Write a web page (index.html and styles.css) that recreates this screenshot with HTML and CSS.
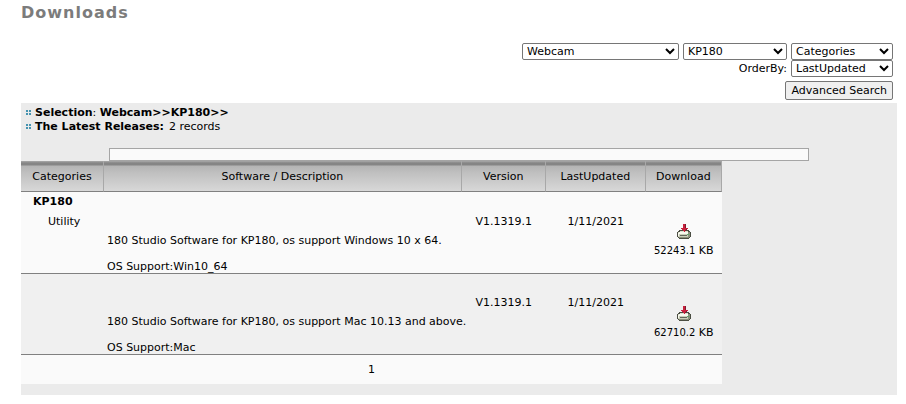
FILE: index.html
```html
<!DOCTYPE html>
<html lang="en">
<head>
  <meta charset="UTF-8" />
  <meta name="viewport" content="width=device-width,initial-scale=1" />
  <title>Downloads</title>
  <link rel="stylesheet" href="styles.css">
</head>
<body>

  <svg class="defs" aria-hidden="true">
    <symbol id="download-icon" viewBox="0 0 14 15">
      <path fill="#4a4d42" d="M2 6h10v1h1v1h1v5h-1v1h-1v1H2v-1H1v-1H0V8h1V7h1z"/>
      <path fill="#dfe2cf" d="M3 7h8v1H3z"/>
      <path fill="#c9cdb8" d="M1 8h11v5H1z"/>
      <path fill="#f8f9ee" d="M2 8h9v1H2zM1 9h10v1H1zM1 10h1v2H1z"/>
      <path fill="#62665a" d="M3 11h7v1H3z"/>
      <path fill="#8b907b" d="M11 8h2v5h-2zM2 13h10v1H2z"/>
      <path fill="#5fa56a" d="M10 10h2v1h-2z"/>
      <path fill="#c8203c" d="M6 0h3v4h2v1h-1v1H9v1H8v1H7V7H6V6H5V5H4V4h2z"/>
      <path fill="#7c1c30" d="M8 0h1v4H8zM9 5h1v1H9zM8 6h1v1H8z"/>
    </symbol>
    <symbol id="dots-icon" viewBox="0 0 5 5" shape-rendering="crispEdges">
      <path fill="#4593b0" d="M0 0h2v2H0zM3 0h2v2H3zM0 3h2v2H0zM3 3h2v2H3z"/>
    </symbol>
  </svg>

  <h1>Downloads</h1>

  <!-- FILTERS -->
  <form class="filters">
    <div class="filter-row">
      <select class="product" aria-label="Product"><option>Webcam</option></select>
      <select class="model" aria-label="Model"><option>KP180</option></select>
      <select class="sort" aria-label="Categories"><option>Categories</option></select>
    </div>
    <div class="filter-row">
      <label for="order-by">OrderBy:</label>
      <select class="sort" id="order-by"><option>LastUpdated</option></select>
    </div>
    <button type="button">Advanced Search</button>
  </form>

  <!-- RESULTS -->
  <div class="panel">
    <div class="summary">
      <div><svg class="dots"><use href="#dots-icon"/></svg><b>Selection</b>: <b>Webcam&gt;&gt;KP180&gt;&gt;</b></div>
      <div><svg class="dots"><use href="#dots-icon"/></svg><b>The Latest Releases:</b><span class="count">2 records</span></div>
    </div>
    <input class="keyword" type="text" aria-label="Keyword">

    <table>
      <thead>
        <tr>
          <th class="col-cat">Categories</th>
          <th>Software / Description</th>
          <th class="col-version">Version</th>
          <th class="col-date">LastUpdated</th>
          <th class="col-file">Download</th>
        </tr>
      </thead>
      <tbody>
        <tr>
          <td class="cat"><b>KP180</b><span>Utility</span></td>
          <td class="desc">180 Studio Software for KP180, os support Windows 10 x 64.<br><br>OS Support:Win10_64</td>
          <td class="info">V1.1319.1</td>
          <td class="info">1/11/2021</td>
          <td class="file"><a href="#" aria-label="Download"><svg class="download"><use href="#download-icon"/></svg></a><small>52243.1</small> KB</td>
        </tr>
        <tr class="alt">
          <td></td>
          <td class="desc">180 Studio Software for KP180, os support Mac 10.13 and above.<br><br>OS Support:Mac</td>
          <td class="info">V1.1319.1</td>
          <td class="info">1/11/2021</td>
          <td class="file"><a href="#" aria-label="Download"><svg class="download"><use href="#download-icon"/></svg></a><small>62710.2</small> KB</td>
        </tr>
      </tbody>
      <tfoot>
        <tr><td colspan="5">1</td></tr>
      </tfoot>
    </table>
  </div>

</body>
</html>
```
FILE: styles.css
```css
body {
  margin: 0;
  padding: 3px 9px 9px 21px;
  background: #fff;
  color: #000;
  font: 11px/14px Verdana, "DejaVu Sans", sans-serif;
}
.defs { position: absolute; width: 0; height: 0; }
h1 { margin: 0; font-size: 16px; line-height: 20px; letter-spacing: 1px; color: #7c7c7c; }

.filters { display: flex; flex-direction: column; align-items: flex-end; padding: 20px 4px 3px 0; }
.filter-row { display: flex; align-items: center; gap: 4px; }
.filters select, .filters button { margin: 0; font: inherit; color: #000; }
.filters select { height: 17px; padding: 0; border: 1px solid #767676; border-radius: 2px; background-color: #fff; }
.product { width: 157px; }
.model { width: 104px; }
.sort { width: 102px; }
.filters button { height: 19px; margin-top: 4px; padding: 0 5px; border: 1px solid #767676; border-radius: 2px; background: #efefef; }

.panel { padding-bottom: 11px; background: #ebebeb; }
.summary { padding: 3px 5px 14px; }
.dots { width: 5px; height: 5px; margin-right: 4px; vertical-align: 1px; }
.count { margin-left: 5px; }
.keyword { display: block; box-sizing: border-box; width: 80%; height: 13px; margin: 0 auto; padding: 0 2px; border: 1px solid #a5a5a5; background: #fafafa; font: inherit; }

table { width: 80%; table-layout: fixed; border-spacing: 0; }
th { height: 31px; box-sizing: border-box; padding: 2px 0 0; border-bottom: 1px solid #808080; border-right: 1px solid #a8a8a8; background: linear-gradient(#aaa 0, #858585 2px, #858585 4px, #b4b4b4 5px, #c0c0c0 12px, #d8d8d8 100%); font-weight: normal; }
.col-cat { width: 83px; }
.col-version { width: 84px; }
.col-date { width: 100px; }
.col-file { width: 76px; }
td { padding: 0; border-bottom: 1px solid #808080; background: #fafafa; line-height: 13px; vertical-align: top; }
.alt td { background: #f0f0f0; }
.cat { padding: 3px 0 0 12px; }
.cat b, .cat span { display: block; }
.cat span { padding: 7px 0 0 15px; }
.desc { padding: 42px 0 0 3px; white-space: nowrap; }
.info { padding-top: 23px; text-align: center; }
.file { padding-top: 32px; text-align: center; }
.alt .desc { padding-top: 41px; }
.alt .info { padding-top: 22px; }
.file a { display: block; margin-bottom: 5px; }
.download { display: block; width: 14px; height: 15px; margin: 0 auto; }
small { font-size: 10px; }
tfoot td { height: 29px; border: 0; text-align: center; vertical-align: middle; }
```
